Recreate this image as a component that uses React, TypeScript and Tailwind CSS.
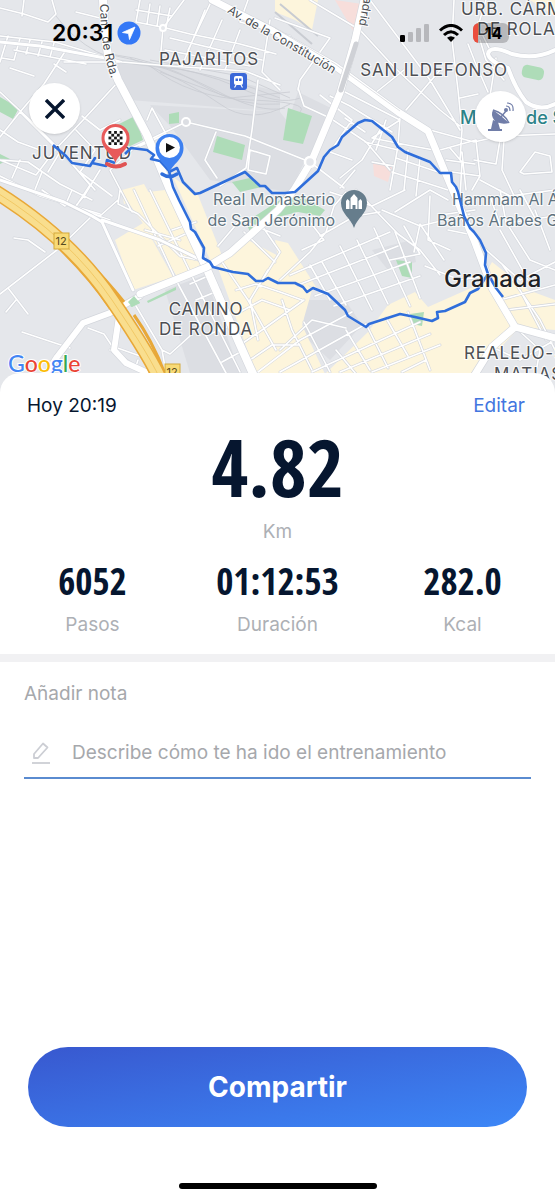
import React from "react";

const minorStreets = [
  // north west
  "M0 36 L55 42 L122 62 L170 66 L245 71 L280 85",
  "M8 36 L0 62", "M20 38 L14 60 L2 58", "M30 40 L26 54", "M42 42 L38 56", "M54 43 L50 57", "M14 50 L56 58",
  "M66 50 L44 84 L20 112 L0 137", "M54 64 L66 72", "M10 68 L34 76", "M0 8 L24 14 L48 22 L56 14 L52 0",
  "M24 0 L22 16", "M76 12 L100 18", "M56 58 L86 64",
  "M0 92 L30 120 L60 150 L95 190", "M118 82 L85 118 L55 150 L36 175 L0 160", "M82 116 L100 130 L120 120",
  "M20 112 L60 152 L48 172", "M76 130 L95 150 L80 172 L112 196", "M60 150 L90 185 L75 208 L110 220",
  "M0 160 L28 162 L60 184 L92 200", "M0 176 L40 196 L100 214", "M20 160 L12 178 M42 172 L34 192",
  "M100 170 L84 196 L74 208", "M132 150 L110 170 L132 212",
  // north
  "M140 0 L136 22 L166 28 L190 34 L240 44 L276 54", "M150 4 L147 24", "M160 6 L157 26", "M170 8 L166 28",
  "M136 10 L172 16", "M184 0 L163 28 L160 62", "M205 10 L182 66", "M222 20 L200 70", "M240 30 L225 70", "M212 0 L188 50",
  "M170 38 L262 60", "M165 50 L250 66", "M248 0 L240 22 L290 36", "M270 20 L262 72 L280 90",
  "M310 0 L360 30 L395 68 L440 110 L460 126", "M275 18 L330 38 L300 80 L298 90",
  "M298 88 L304 106 L330 118 L366 142 L390 170", "M370 0 L400 40 L430 80 L460 130",
  "M454 0 L452 40 L458 90 L462 130 L460 160", "M440 70 L406 110", "M374 94 L404 70",
  "M480 40 L486 60 L504 80", "M468 44 L475 62 L488 92", "M496 58 L490 96 L502 120", "M460 98 L478 94",
  "M486 0 L478 26 L490 50",
  // centre
  "M128 150 L153 138 L186 122 L245 136 L280 150", "M147 120 L152 108 L166 134 L140 146", "M216 132 L205 160 L217 178",
  "M258 80 L252 130 L246 168 L220 186", "M250 150 L270 156 L266 174 L248 170 Z",
  "M280 150 L310 162 L344 188", "M320 95 L352 120 L330 152 L352 160", "M345 92 L400 120 L372 138",
  "M330 96 L350 106 L392 132", "M400 118 L398 146 L390 190", "M372 138 L412 146 L434 150",
  "M380 130 L362 160 L340 178", "M345 118 L365 132", "M355 170 L340 188", "M365 142 L398 150 M372 162 L394 166 M386 120 L376 150",
  "M408 150 L404 190", "M420 158 L416 196", "M396 158 L450 176", "M392 172 L448 190",
  // east
  "M430 130 L474 142 L500 136 L555 134", "M440 150 L476 140 L480 176 L472 190", "M450 148 L462 162 L460 198",
  "M474 160 L496 164 L500 140", "M446 160 L475 164 M452 172 L480 176 M462 152 L466 190",
  "M504 140 L502 170 L516 200", "M520 172 L535 152 L550 156 L552 172 L524 174 Z",
  "M480 180 L510 196 L555 190", "M500 190 L506 222 L530 260 L555 270", "M520 190 L536 220", "M490 196 L500 225",
  "M555 216 L514 222", "M535 210 L550 250",
  // central city
  "M346 192 L334 206 L326 232 L310 252 L280 280", "M330 192 L372 206 L405 190", "M356 190 L398 234 L420 250 L440 275",
  "M395 212 L430 190 L448 200", "M382 210 L420 226 L470 214", "M310 222 L324 240 L302 250",
  "M320 236 L355 216 L380 212", "M290 275 L390 232", "M298 285 L398 246", "M315 296 L410 262", "M334 306 L420 276",
  "M340 246 L372 310", "M322 262 L346 305", "M357 240 L388 304", "M374 228 L410 306", "M395 232 L420 298",
  "M310 265 L330 300", "M404 226 L420 254 L390 260", "M414 252 L420 224 L444 260", "M430 196 L428 240 L450 250",
  "M440 215 L475 210", "M448 230 L478 236", "M425 266 L460 280 L486 276",
  // south centre
  "M280 236 L240 220 L218 246", "M258 220 L280 252 L256 290", "M244 232 L275 262", "M222 262 L248 300 L276 350",
  "M236 290 L256 284 L280 292 L302 300", "M240 312 L262 300 L290 310", "M240 345 L262 330 L304 300",
  "M250 360 L272 345 L300 345", "M268 270 L250 300 L258 340", "M282 300 L292 330 L312 370",
  "M280 350 L312 320 L346 328", "M258 372 L300 340 L352 312", "M280 372 L366 324", "M312 372 L420 322",
  "M340 372 L430 334", "M372 372 L440 345", "M402 372 L426 360", "M346 330 L370 370", "M366 324 L388 368", "M386 318 L408 356",
  "M408 312 L430 370", "M304 322 L330 372", "M336 350 L356 374",
  // south east
  "M500 300 L555 285", "M506 310 L555 304", "M520 290 L546 340", "M502 264 L540 320 L555 350",
  "M484 248 L520 280 L555 262", "M500 230 L528 280", "M490 346 L520 360 L555 340", "M515 327 L540 350 L536 372",
  // south west
  "M0 294 L57 250 L92 216", "M8 288 L28 314", "M16 300 L6 312", "M14 238 L28 240 L45 252", "M0 130 L18 142 L40 150",
  "M22 332 L70 348", "M88 328 L104 334 L112 346 L140 356", "M110 350 L136 366 L138 360",
  "M120 190 L118 204 L138 214 L180 256 L207 262", "M118 200 L100 216 L64 204", "M42 190 L65 206 L72 190",
  "M134 190 L175 278", "M150 190 L190 272", "M145 230 L180 240 M158 246 L190 232 M172 230 L196 222",
  "M176 280 L226 373", "M190 272 L240 372", "M136 306 L162 350 L170 354 L190 336", "M162 350 L166 373",
  "M190 284 L208 276 M196 300 L220 290 M210 334 L234 324 M222 362 L244 350",
  "M64 62 L120 62",
];

const routes = [
  "M53 145 L66 156 L72 163 L90 166 L95 158 L92 163 L106 166 L107 160 L115 163 M125 154 L131 148 L147 150 L154 155 L151 159 L160 161 L169 171 L173 187 L179 200 L190 222 L191 229 L195 232 L204 248 L203 258 L210 262 L213 267 L233 272 L248 274 L256 281 L263 281 L268 278 L278 283 L295 283 L303 287 L307 292 L313 288 L328 294 L345 310 L348 316 L366 327 L369 324 L400 314 L415 317 L432 321 L438 318 L437 312 L445 311 L465 302 L470 293 L478 289 L488 274",
  "M503 297 L496 288 L488 274 L485 265 L486 253 L480 240 L474 232 L470 228 L464 216 L458 192 L456 187 L452 182 L451 173 L440 173 L430 162 L405 152 L398 147 L392 137 L372 121 L365 120 L358 123 L342 137 L338 145 L330 150 L324 157 L318 171 L295 192 L285 193 L272 193 L265 186 L260 186 L245 172 L200 193 L195 194 L183 182 L177 168 L169 172",
];

function Roads({ d, width }: { d: string; width: number }) {
  return (
    <g fill="none" strokeLinejoin="round" strokeLinecap="round">
      <path d={d} stroke="#d3d6dc" strokeWidth={width + 1.2} />
      <path d={d} stroke="#ffffff" strokeWidth={width} />
    </g>
  );
}

const label = "font-['Inter',sans-serif] [paint-order:stroke] stroke-white/80 stroke-2";

function RouteMap() {
  return (
    <svg
      viewBox="0 0 555 400"
      preserveAspectRatio="xMidYMin slice"
      className="block h-[400px] w-full bg-[#e4e6ea]"
      role="img"
      aria-label="Mapa del recorrido"
    >
      <path d="M0 0H555V400H0Z" fill="#e5e7eb" />
      <g fill="#dcdee3">
        <path d="M108 58 L170 66 L280 92 V112 L130 100Z" />
        <path d="M150 105 L280 112 L310 150 L290 192 L210 180 L172 128Z" />
        <path d="M298 92 L335 110 L310 160 L280 145Z" />
        <path d="M305 300 L345 300 L362 325 L330 360 L303 335Z" />
        <path d="M165 290 L205 275 L240 373 H190Z" />
        <path d="M372 250 L412 240 L416 262 L388 270Z" />
      </g>
      <g fill="#fdf5dc">
        <path d="M115 240 L143 223 L173 277 L133 290Z" />
        <path d="M123 195 L165 190 L205 262 L178 278 L142 222Z" />
        <path d="M173 177 L198 195 L223 258 L211 262Z" />
        <path d="M218 268 L244 238 L290 262 L312 290 L302 325 L325 374 H256Z" />
        <path d="M275 240 L288 243 L318 290 L280 270Z" />
        <path d="M325 374 L368 332 L388 305 L415 292 L428 307 L480 284 L492 262 L528 290 L555 300 V330 L520 327 L475 374Z" />
        <path d="M275 0 L318 0 L312 30 L295 20 L275 12Z" />
        <path d="M530 0 H555 V16Z M122 190 L144 184 L150 195 L124 204Z" />
      </g>
      <g fill="#f7dedb">
        <path d="M335 0 L362 4 L355 34Z" />
        <path d="M373 163 L392 167 L388 182 L374 176Z" />
      </g>
      <g fill="#aedcb8">
        <path d="M115 126 L135 116 L143 140 L128 147Z" />
        <path d="M169 114 L179 112 V123 L169 124Z" />
        <path d="M217 136 L245 145 L242 160 L213 152Z" />
        <path d="M288 108 L312 116 L303 144 L283 140Z" />
        <path d="M0 97 L19 108 L13 119 L0 112Z M0 154 L10 159 L0 164Z" />
        <path d="M232 182 L250 178 L262 187 L240 192Z" />
        <path d="M246 222 L280 200 L300 196 L325 210 L320 216 L298 212 L266 220 L250 232Z" />
        <path d="M396 260 L412 262 L412 278 L402 276Z" />
        <path d="M410 314 L424 312 L422 326 L412 324Z" />
        <rect x="522" y="66" width="22" height="13" rx="5" transform="rotate(12 533 72)" />
        <path d="M127 300 L136 296 L140 303 L131 307Z M147 301 L176 287 V290 L148 303Z" />
      </g>

      <g fill="none" stroke="#c9ccd2" strokeWidth="0.8">
        <path d="M56 16 Q90 62 150 66 T280 98" />
        <path d="M110 54 Q160 60 200 84 T280 104" />
        <path d="M112 55 Q170 66 215 90 T285 108" />
        <path d="M130 58 Q190 82 220 104 T290 104" />
        <path d="M140 62 Q200 70 240 88 T300 98" />
        <path d="M150 66 Q190 98 250 100 T300 112" />
        <path d="M150 60 L240 76 L290 98 M160 72 L230 98 L290 92" />
        <path d="M280 4 L318 36 M275 12 L312 44" strokeWidth="2" />
      </g>

      <Roads d={minorStreets.join(" ")} width={1.6} />

      <Roads d="M0 42 L40 46 L105 58 M92 216 L102 222 L133 290 M92 216 L64 202 L0 180 M102 220 L160 240 L205 262" width={3} />
      <Roads d="M555 50 Q535 60 512 54 Q490 44 488 54 Q490 62 508 68 Q516 90 526 102 Q540 112 555 104" width={4} />
      <Roads d="M140 296 L110 313 L83 323 L57 357 L46 374 M120 310 L114 350 L126 363 L150 374" width={6} />
      <Roads d="M103 0 L105 36 L108 55 L118 80 L147 135 L170 190 L205 265 L240 345 L254 376" width={8} />
      <Roads d="M212 0 L275 32 L335 66 L398 112 L428 131 L450 184 L474 240 L492 288 L515 327 L492 347 L474 376 M515 327 L555 338" width={7} />
      <path d="M275 28 L335 64 L400 111" fill="none" stroke="#d5d8dd" strokeWidth="0.8" />
      <Roads d="M364 0 L355 40 L340 93 L312 160 L294 190 L278 210 L230 253 L207 267 L140 294" width={7} />
      <path d="M356 44 L341 90" fill="none" stroke="#cfd1d6" strokeWidth="5" strokeLinecap="round" />
      <circle cx="310" cy="162" r="5" fill="#e5e7eb" stroke="#fff" strokeWidth="2.5" />
      <circle cx="186" cy="122" r="4" fill="#dcdee3" stroke="#fff" strokeWidth="2" />
      <circle cx="163" cy="28" r="3" fill="#e5e7eb" stroke="#fff" strokeWidth="2" />
      <path d="M128 302 L134 296 L140 303 L132 307Z" fill="#aedcb8" />

      <g fill="none">
        <path d="M57 246 Q90 278 110 308 M88 262 Q105 278 124 302 M120 320 Q140 346 151 374 M134 315 Q152 340 165 374" stroke="#e8a838" strokeWidth="3" />
        <path d="M-4 192 Q70 238 112 300 T162 384" stroke="#e8a838" strokeWidth="15" />
        <path d="M-4 192 Q70 238 112 300 T162 384" stroke="#f9de8e" strokeWidth="12" />
        <path d="M-4 192 Q70 238 112 300 T162 384" stroke="#efc35c" strokeWidth="0.8" />
      </g>
      <g className="font-['Inter',sans-serif] text-[11px]" textAnchor="middle" fill="#564a20">
        <rect x="54" y="233" width="15" height="16" fill="#f8da76" stroke="#d4a93c" />
        <text x="61" y="245">12</text>
        <rect x="165" y="364" width="15" height="16" fill="#f8da76" stroke="#d4a93c" />
        <text x="172" y="376">12</text>
      </g>

      <g className={`${label} text-[17px] tracking-wider`} fill="#4c4f54" textAnchor="middle">
        <text x="209" y="65">PAJARITOS</text>
        <text x="434" y="76">SAN ILDEFONSO</text>
        <text x="82" y="159">JUVENTUD</text>
        <text x="206" y="315">CAMINO</text>
        <text x="206" y="335">DE RONDA</text>
        <text x="461" y="15" textAnchor="start">URB. CÁRMENES</text>
        <text x="477" y="35" textAnchor="start">DE ROLANDO</text>
        <text x="464" y="359" textAnchor="start">REALEJO-SAN</text>
        <text x="494" y="380" textAnchor="start">MATIAS</text>
      </g>
      <g className={`${label} text-[16px]`} fill="#5f7380">
        <text x="335" y="205" textAnchor="end">Real Monasterio</text>
        <text x="335" y="226" textAnchor="end">de San Jerónimo</text>
        <text x="452" y="205">Hammam Al Ándalus</text>
        <text x="437" y="226">Baños Árabes Granada</text>
      </g>
      <g className={`${label} text-[18px] font-medium`} fill="#2b8288">
        <text x="460" y="124">M</text>
        <text x="526" y="124">de San</text>
      </g>
      <path id="constitucion" d="M227 12 C250 28 300 52 345 82" fill="none" />
      <path id="ronda" d="M100 4 C101 35 102 55 116 92" fill="none" />
      <path id="madrid" d="M366 -14 L357 36" fill="none" />
      <g className={`${label} text-[12px]`} fill="#4c4f54">
        <text><textPath href="#constitucion">Av. de la Constitución</textPath></text>
        <text><textPath href="#ronda">Cam. de Rda.</textPath></text>
        <text><textPath href="#madrid">Madrid</textPath></text>
      </g>

      {/* train station */}
      <rect x="230" y="73" width="17" height="17" rx="3" fill="#3b68d8" />
      <rect x="234" y="76" width="9" height="9" rx="2" fill="#fff" />
      <path d="M235.500 78.500h2.500v2.500h-2.500z M239 78.500h2.500v2.500H239z" fill="#3b68d8" />
      <path d="M236 85 L234.500 87.500 M241 85 L242.500 87.500" stroke="#fff" strokeWidth="1.2" />

      {/* landmark */}
      <path d="M354 228 C351 218 341 214 341 203 A13 13 0 0 1 367 203 C367 214 357 218 354 228Z" fill="#667d8c" />
      <path d="M346 209 V201 L347.500 199 L349.500 201 V209Z M350.500 209 V198 L354 194 L357.500 198 V209 H355.500 V205 H352.500 V209Z M358.500 209 V201 L360.500 199 L362 201 V209Z" fill="#fff" />

      <g fill="none" stroke="#2f6edb" strokeWidth="2.600" strokeLinejoin="round">
        {routes.map((d) => <path key={d} d={d} />)}
      </g>
      <text x="444" y="287" className="font-['Inter',sans-serif] text-[24px] font-medium stroke-white/60 stroke-2 [paint-order:stroke]" fill="#202226">Granada</text>

      {/* finish marker */}
      <path d="M107 164 Q116 169 125 164" fill="none" stroke="#e05353" strokeWidth="4" strokeLinecap="round" />
      <path d="M115.500 163 C113 154 101.500 150 101.500 138 A14 14 0 0 1 129.500 138 C129.500 150 118 154 115.500 163Z" fill="#e85a5a" />
      <circle cx="115.500" cy="138" r="11" fill="#fff" />
      <g fill="#181818">
        {[0, 1, 2, 3, 4].flatMap((row) =>
          [0, 1, 2, 3, 4].filter((col) => (row + col) % 2 === 0).map((col) => (
            <rect key={`${row}-${col}`} x={108.5 + col * 2.8} y={131 + row * 2.8} width="2.800" height="2.800" />
          )),
        )}
      </g>

      {/* start marker */}
      <path d="M162 174 Q169.500 179 177 174" fill="none" stroke="#2f6edb" strokeWidth="3.500" strokeLinecap="round" />
      <path d="M169.500 173 C167 164 155.500 160 155.500 148 A14 14 0 0 1 183.500 148 C183.500 160 172 164 169.500 173Z" fill="#3d80f0" />
      <circle cx="169.500" cy="147.500" r="10.500" fill="#fff" />
      <path d="M166 143 L175 147.500 L166 152.500Z" fill="#111" />

      <text x="8" y="372" className="font-['Lato',sans-serif] text-[23px] font-medium stroke-white stroke-2 [paint-order:stroke]">
        <tspan fill="#4285f4">G</tspan><tspan fill="#ea4335">o</tspan><tspan fill="#fbbc04">o</tspan><tspan fill="#4285f4">g</tspan><tspan fill="#34a853">l</tspan><tspan fill="#ea4335">e</tspan>
      </text>
    </svg>
  );
}

function StatusBar() {
  return (
    <div className="flex items-center justify-between pr-[46px] pl-[52px]">
      <div className="flex items-center gap-1">
        <span className="text-[23px] leading-7 font-semibold text-black">20:31</span>
        <svg viewBox="0 0 24 24" className="size-6">
          <circle cx="12" cy="12" r="11.500" fill="#3478f6" />
          <path d="M18 6 L5.500 11.500 L11.500 12.500 L12.500 18.500Z" fill="#fff" stroke="#fff" strokeWidth="0.800" strokeLinejoin="round" />
        </svg>
      </div>
      <div className="flex items-center gap-2.5">
        <svg viewBox="0 0 29 18" className="h-[18px] w-[29px]">
          <rect x="0" y="11" width="5" height="7" rx="1.300" />
          <g fill="#000" fillOpacity="0.200">
            <rect x="8" y="8" width="5" height="10" rx="1.300" />
            <rect x="16" y="4" width="5" height="14" rx="1.300" />
            <rect x="24" y="0" width="5" height="18" rx="1.300" />
          </g>
        </svg>
        <svg viewBox="0 0 24 18" className="h-[18px] w-6" fill="none" stroke="#000" strokeWidth="3">
          <path d="M1 6.500 Q12 -3.500 23 6.500" />
          <path d="M5 11 Q12 4.500 19 11" />
          <path d="M12 18 L8 13.800 Q12 10.800 16 13.800Z" fill="#000" stroke="none" />
        </svg>
        <div className="flex h-5 w-9 overflow-hidden rounded-md bg-black/20">
          <span className="w-[5px] bg-[#eb4d3d]" />
          <span className="flex-1 text-center text-base leading-5 font-bold text-black">14</span>
        </div>
      </div>
    </div>
  );
}

function SatelliteIcon() {
  return (
    <svg viewBox="0 0 28 30" className="h-[30px] w-7">
      <path d="M6 8 C2 16 10 24 22 21 L14 14Z M6 18 L4 27 H1 V29 H15 V27 H13 L11 20Z" fill="#707da8" />
      <path d="M6 8 Q17 11 22 21" fill="none" stroke="#707da8" strokeWidth="1.400" />
      <path d="M14 15 L19 9" stroke="#707da8" strokeWidth="1.400" />
      <circle cx="19" cy="8" r="2" fill="#707da8" />
      <path d="M19 4 Q23 4 23 9 M20 1 Q27 1 26 9" fill="none" stroke="#707da8" strokeWidth="1.200" />
    </svg>
  );
}

const stats = [
  { value: "6052", name: "Pasos" },
  { value: "01:12:53", name: "Duración" },
  { value: "282.0", name: "Kcal" },
];

export default function App() {
  return (
    <main className="flex min-h-screen flex-col bg-white font-['Inter',sans-serif] text-[#06162f]">
      <header className="relative h-[373px] shrink-0">
        <RouteMap />
        <div className="absolute inset-x-0 top-0 pt-[19px]">
          <StatusBar />
          <div className="flex items-start justify-between pt-9 pr-[29px] pl-[29px]">
            <button type="button" aria-label="Cerrar" className="flex size-[51px] items-center justify-center rounded-full bg-white shadow-sm">
              <svg viewBox="0 0 20 20" className="size-5" fill="none" stroke="#06162f" strokeWidth="3.400">
                <path d="M1 1 L19 19 M19 1 L1 19" />
              </svg>
            </button>
            <button type="button" aria-label="Señal GPS" className="mt-2 flex size-[51px] items-center justify-center rounded-full bg-white shadow-sm">
              <SatelliteIcon />
            </button>
          </div>
        </div>
      </header>

      <section className="relative rounded-t-[20px] bg-white pt-[21px] pb-[17px]">
        <div className="flex items-center justify-between pr-[30px] pl-[27px] text-[19px] leading-6">
          <h1>Hoy 20:19</h1>
          <button type="button" className="text-[#4276e0]">Editar</button>
        </div>
        <div className="mt-3 text-center">
          <p className="font-['Noto_Sans_ExtraCondensed','Open_Sans_Condensed','Liberation_Sans_Narrow',sans-serif] text-[80px] leading-[72px] font-bold">4.82</p>
          <p className="mt-[18px] text-[19px] leading-6 text-[#adb0b5]">Km</p>
        </div>
        <dl className="mt-[17px] grid grid-cols-3 text-center">
          {stats.map(({ value, name }) => (
            <div key={name} className="flex flex-col-reverse gap-3">
              <dt className="text-[19px] leading-6 text-[#adb0b5]">{name}</dt>
              <dd className="font-['Noto_Sans_ExtraCondensed','Open_Sans_Condensed','Liberation_Sans_Narrow',sans-serif] text-[37px] leading-10 font-bold">{value}</dd>
            </div>
          ))}
        </dl>
      </section>

      <section className="border-t-8 border-[#f1f1f3] px-6 pt-5">
        <label htmlFor="note" className="block text-[19px] leading-6 text-[#a6a8ac]">Añadir nota</label>
        <div className="mt-[22px] flex h-[51px] items-center gap-[22px] border-b-2 border-[#5a8bd0] pl-2">
          <svg viewBox="0 0 18 22" className="h-[22px] w-[18px] shrink-0" fill="none" stroke="#ccced4" strokeWidth="1.800" strokeLinejoin="round">
            <path d="M2 16 L2 12 L11 1.500 L15.500 5.500 L6 16 Z" />
            <path d="M0 21 H18" />
          </svg>
          <input
            id="note"
            type="text"
            placeholder="Describe cómo te ha ido el entrenamiento"
            className="min-w-0 flex-1 text-[19px] leading-6 outline-none placeholder:text-[#a6a8ac]"
          />
        </div>
      </section>

      <footer className="mt-auto flex flex-col items-center px-7 pt-10 pb-[11px]">
        <button type="button" className="h-20 w-full rounded-full bg-linear-to-br from-[#3858cf] to-[#3c87f7] text-[28px] leading-8 font-bold text-white">
          Compartir
        </button>
        <div className="mt-14 h-1.5 w-[198px] rounded-full bg-black" />
      </footer>
    </main>
  );
}
